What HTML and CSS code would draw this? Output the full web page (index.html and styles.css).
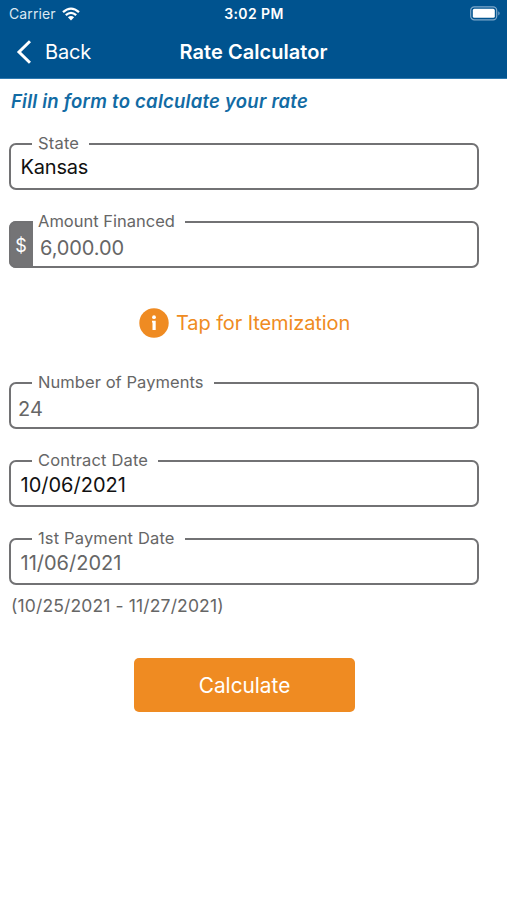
FILE: index.html
```html
<!DOCTYPE html>
<html lang="en">
<head>
<meta charset="utf-8">
<title>Rate Calculator</title>
<link rel="stylesheet" href="styles.css">
</head>
<body>
<header class="top">
  <div class="status">
    <div class="carrier"><span class="carrier-name">Carrier</span>
      <svg class="wifi" width="18" height="14" viewBox="0 0 18 14" fill="none" stroke="#fff" stroke-width="2.3"><path d="M1 5.2Q9-2 17 5.2M3.8 8.2Q9 3.6 14.2 8.2"/><path d="M5.9 10.2Q9 7.6 12.1 10.2L9 13.5Z" fill="#fff" stroke="none"/></svg>
    </div>
    <span class="time">3:02 PM</span>
    <svg class="battery" width="31" height="15" viewBox="0 0 31 15"><rect x=".7" y=".8" width="26" height="13" rx="3.6" fill="none" stroke="#7fa9cb" stroke-width="1.2"/><rect x="2.8" y="2.8" width="22" height="9" rx="1.6" fill="#fff"/><path d="M28.3 5.2Q31 7.3 28.3 9.4Z" fill="#7fa9cb"/></svg>
  </div>
  <nav class="nav">
    <a class="back"><svg width="15" height="24" viewBox="0 0 15 24" fill="none" stroke="#fff" stroke-width="3"><path d="M14 1.2 3 12 14 22.8"/></svg><span class="back-text">Back</span></a>
    <h1 class="title">Rate Calculator</h1>
  </nav>
</header>
<main class="form">
  <p class="intro">Fill in form to calculate your rate</p>
  <fieldset class="field state"><legend><span class="l-state">State</span></legend><div class="value">Kansas</div></fieldset>
  <fieldset class="field amount"><legend><span class="l-amount">Amount Financed</span></legend><span class="prefix">$</span><div class="value">6,000.00</div></fieldset>
  <a class="itemize"><svg width="30" height="30" viewBox="0 0 30 30"><circle cx="15" cy="15" r="14.7" fill="#ef8b22"/><circle cx="15" cy="9.2" r="1.9" fill="#fff"/><path d="M13 12.8h3.7v9.2h-3.2v-7.4h-.5Z" fill="#fff"/></svg><span class="itemize-text">Tap for Itemization</span></a>
  <fieldset class="field count"><legend><span class="l-count">Number of Payments</span></legend><div class="value">24</div></fieldset>
  <fieldset class="field contract"><legend><span class="l-contract">Contract Date</span></legend><div class="value">10/06/2021</div></fieldset>
  <fieldset class="field first"><legend><span class="l-first">1st Payment Date</span></legend><div class="value">11/06/2021</div></fieldset>
  <p class="range">(10/25/2021 - 11/27/2021)</p>
  <button class="calculate">Calculate</button>
</main>
</body>
</html>
```
FILE: styles.css
```css
* { box-sizing: border-box; }
body { margin: 0; background: #fff; font-family: Inter, sans-serif; color: #666; }
.top { height: 79px; background: #00538f; border-bottom: 1px solid #2e79b0; color: #fff; }
.status { height: 27px; display: grid; grid-template-columns: 1fr auto 1fr; align-items: center; padding: 0 6px 0 9px; }
.carrier { display: flex; align-items: center; gap: 6px; font-size: 14px; letter-spacing: .1px; color: #dbe8f2; }
.time { font-size: 14px; font-weight: 600; letter-spacing: .4px; margin-right: 2px; }
.battery { justify-self: end; }
.nav { height: 50px; display: grid; grid-template-columns: 1fr auto 1fr; align-items: center; padding: 0 0 0 16px; }
.back { display: flex; align-items: center; gap: 14px; font-size: 20px; letter-spacing: -.2px; }
.title { margin: 0 16px 0 0; font-size: 20px; font-weight: 600; line-height: 24px; letter-spacing: .05px; }
.form { display: flex; flex-direction: column; padding-left: 9px; }
.intro { margin: 10px 0 21px 2px; font-size: 18.5px; line-height: 24px; font-weight: 600; font-style: italic; letter-spacing: .24px; color: #126ba4; }
.field { width: 470px; height: 56px; margin: 0 0 22px; padding: 0; min-width: 0; border: 2px solid #727274; border-radius: 7px; }
.field legend { height: 20px; margin-left: 21px; padding: 0 10px 0 6px; font-size: 16.5px; line-height: 18px; }
.l-state { letter-spacing: .2px; }
.l-count { letter-spacing: .06px; }
.l-contract { letter-spacing: .16px; }
.l-first { letter-spacing: .15px; }
.value { font-size: 20px; line-height: 24px; padding: 1px 0 0 9.5px; }
.state .value, .contract .value { color: #111; }
.state .value { letter-spacing: -.2px; }
.contract .value, .first .value { padding-top: 2px; }
.amount { background: linear-gradient(90deg, #747476 24px, #fff 24px) border-box; margin-bottom: 39px; }
.amount .prefix { float: left; width: 20px; color: #fff; font-size: 18px; line-height: 27px; text-align: center; }
.amount .value { margin-left: 19.5px; padding-top: 4px; letter-spacing: -.1px; }
.itemize { display: flex; align-items: center; gap: 7px; height: 32px; margin: 0 0 34px 130px; font-size: 20px; letter-spacing: -.1px; color: #ef8b22; }
.count .value { padding: 4px 0 0 7px; }
.first { margin-bottom: 9px; }
.range { margin: 0 0 40px 2px; font-size: 17.5px; line-height: 24px; letter-spacing: .14px; }
.calculate { width: 221px; height: 54px; margin-left: 125px; padding: 0; border: 0; border-radius: 5px; background: #ef8b22; color: #fff; font: 20.8px/55px Inter, sans-serif; }
```
